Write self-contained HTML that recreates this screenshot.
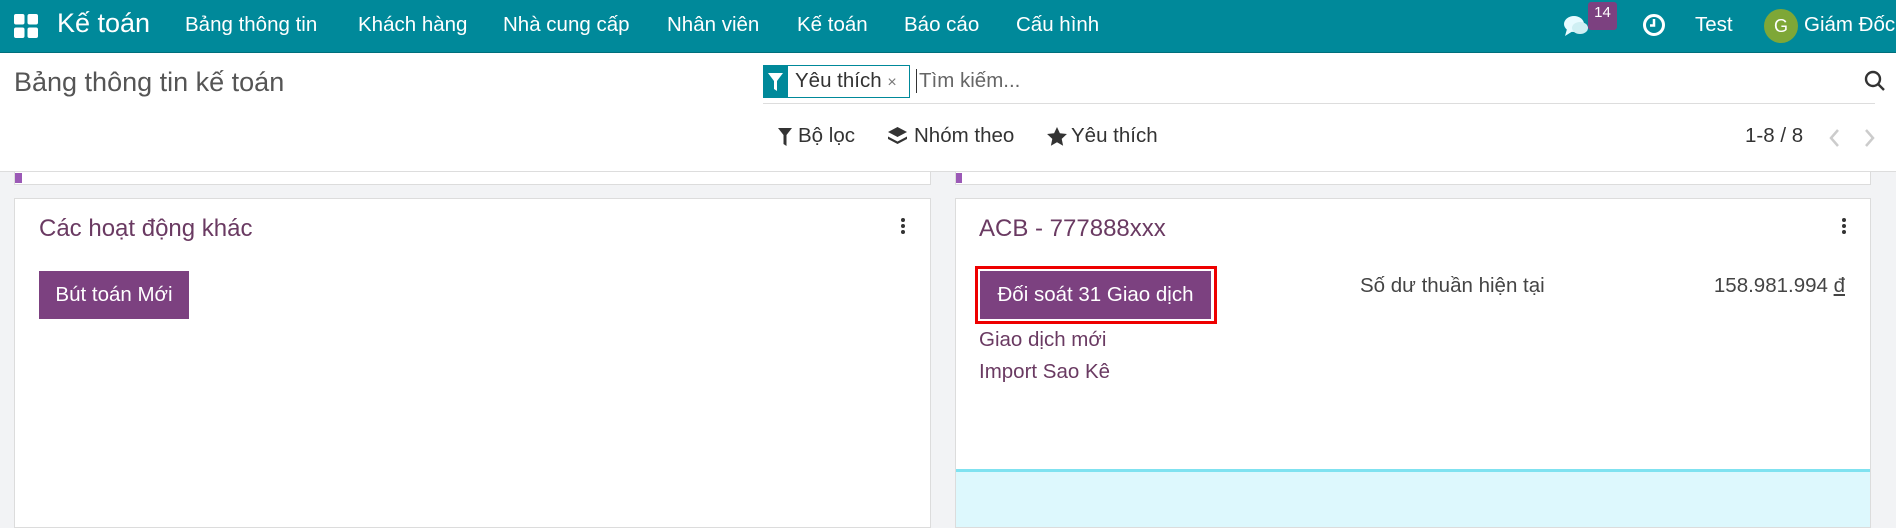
<!DOCTYPE html>
<html><head><meta charset="utf-8"><style>
*{box-sizing:border-box;margin:0;padding:0}
html,body{width:1896px;height:528px;overflow:hidden}
body{background:#f2f3f5;font-family:"Liberation Sans",sans-serif;position:relative}
.a{position:absolute;white-space:nowrap}
.nav{position:absolute;left:0;top:0;width:1896px;height:53px;background:#00899a;border-bottom:1px solid #006f7c;z-index:5}
.nav .a{color:#fff;font-size:20.5px;top:13px}
.cp{position:absolute;left:0;top:53px;width:1896px;height:119px;background:#fff;border-bottom:1px solid #ddd;z-index:4}
.card{position:absolute;background:#fff;border:1px solid #dcdcdc}
.btn{position:absolute;background:#7c4180;color:#fff;font-size:20.5px;text-align:center;line-height:48px}
.pl{color:#6a3a62}
.kb{position:absolute;width:4px}
.kb i{display:block;width:4px;height:4px;border-radius:2px;background:#333;margin-bottom:2px}
</style></head><body>
<div class="nav">
 <svg class="a" style="left:14px;top:14px" width="24" height="24" viewBox="0 0 24 24" fill="#fff"><rect x="0" y="0" width="10.5" height="10.5" rx="2"/><rect x="13.5" y="0" width="10.5" height="10.5" rx="2"/><rect x="0" y="13.5" width="10.5" height="10.5" rx="2"/><rect x="13.5" y="13.5" width="10.5" height="10.5" rx="2"/></svg>
 <div class="a" style="left:57px;top:8px;font-size:27px">Kế toán</div>
 <div class="a" style="left:185px">Bảng thông tin</div>
 <div class="a" style="left:358px">Khách hàng</div>
 <div class="a" style="left:503px">Nhà cung cấp</div>
 <div class="a" style="left:667px">Nhân viên</div>
 <div class="a" style="left:797px">Kế toán</div>
 <div class="a" style="left:904px">Báo cáo</div>
 <div class="a" style="left:1016px">Cấu hình</div>
 <svg class="a" style="left:1563px;top:14px" width="28" height="24" viewBox="0 0 28 24" fill="#e8fbff"><ellipse cx="11" cy="10" rx="10" ry="8"/><path d="M4 15 L2 22 L10 17Z"/><ellipse cx="17" cy="14" rx="8" ry="6" fill="#cfeff3"/></svg>
 <div class="a" style="left:1588px;top:2px;width:29px;height:28px;background:#7c4180;border-radius:3px;font-size:15px;text-align:center;line-height:22px">14</div>
 <svg class="a" style="left:1642px;top:13px" width="24" height="24" viewBox="0 0 24 24" fill="none" stroke="#fff" stroke-width="3"><circle cx="12" cy="12" r="9.5"/><path d="M12 6v6.5H8" stroke-width="2.5"/></svg>
 <div class="a" style="left:1695px">Test</div>
 <div class="a" style="left:1764px;top:9px;width:34px;height:34px;border-radius:17px;background:#7ea737;font-size:18px;text-align:center;line-height:34px">G</div>
 <div class="a" style="left:1804px">Giám Đốc</div>
</div>
<div class="cp">
 <div class="a" style="left:14px;top:14px;font-size:27px;color:#555">Bảng thông tin kế toán</div>
 <div class="a" style="left:763px;top:12px;width:147px;height:33px;border:1px solid #00899a;background:#fff"></div>
 <div class="a" style="left:763px;top:12px;width:25px;height:33px;background:#00899a"></div>
 <svg class="a" style="left:768px;top:20px" width="15" height="18" viewBox="0 0 15 18" fill="#fff"><path d="M0 0H15L9 8V18L6 16V8Z"/></svg>
 <div class="a" style="left:795px;top:16px;font-size:20.5px;color:#333">Yêu thích <span style="color:#777;font-size:16px">×</span></div>
 <div class="a" style="left:916px;top:16px;width:1px;height:24px;background:#333"></div>
 <div class="a" style="left:919px;top:16px;font-size:20.5px;color:#666">Tìm kiếm...</div>
 <div class="a" style="left:763px;top:50px;width:1112px;height:1px;background:#ddd"></div>
 <svg class="a" style="left:1864px;top:17px" width="22" height="22" viewBox="0 0 22 22" fill="none" stroke="#333" stroke-width="2.4"><circle cx="9" cy="9" r="7"/><path d="M14 14l6 6"/></svg>
 <svg class="a" style="left:778px;top:75px" width="14" height="18" viewBox="0 0 14 18" fill="#333"><path d="M0 0H14L8.5 7V18L5.5 16V7Z"/></svg>
 <div class="a" style="left:798px;top:71px;font-size:20.5px;color:#333">Bộ lọc</div>
 <svg class="a" style="left:888px;top:74px" width="19" height="20" viewBox="0 0 19 20" fill="#333"><path d="M9.5 0L19 5L9.5 10L0 5Z"/><path d="M0 9.5L9.5 14.5L19 9.5V12L9.5 17L0 12Z"/></svg>
 <div class="a" style="left:914px;top:71px;font-size:20.5px;color:#333">Nhóm theo</div>
 <svg class="a" style="left:1047px;top:74px" width="20" height="19" viewBox="0 0 24 23" fill="#333"><path d="M12 0l3.5 7.5 8.5 1-6.3 5.8 1.7 8.4L12 18.5 4.6 22.7l1.7-8.4L0 8.5l8.5-1z"/></svg>
 <div class="a" style="left:1071px;top:71px;font-size:20.5px;color:#333">Yêu thích</div>
 <div class="a" style="left:1745px;top:71px;font-size:20.5px;color:#333">1-8 / 8</div>
 <svg class="a" style="left:1827px;top:75px" width="50" height="20" viewBox="0 0 50 20" fill="none" stroke="#ccc" stroke-width="2.5"><path d="M11 2L4 10L11 18"/><path d="M39 2L46 10L39 18"/></svg>
</div>
<div class="card" style="left:14px;top:160px;width:917px;height:25px"></div>
<div class="a" style="left:15px;top:173px;width:7px;height:10px;background:#9b59b6"></div>
<div class="card" style="left:955px;top:160px;width:916px;height:25px"></div>
<div class="a" style="left:956px;top:173px;width:6px;height:10px;background:#9b59b6"></div>

<div class="card" style="left:14px;top:198px;width:917px;height:330px"></div>
<div class="a pl" style="left:39px;top:215px;font-size:24px">Các hoạt động khác</div>
<div class="kb" style="left:901px;top:218px"><i></i><i></i><i></i></div>
<div class="btn" style="left:39px;top:271px;width:150px">Bút toán Mới</div>

<div class="card" style="left:955px;top:198px;width:916px;height:330px"></div>
<div class="a pl" style="left:979px;top:215px;font-size:24px">ACB - 777888xxx</div>
<div class="kb" style="left:1842px;top:218px"><i></i><i></i><i></i></div>
<div class="a" style="left:975px;top:266px;width:242px;height:58px;border:3px solid #e00"></div>
<div class="btn" style="left:980px;top:271px;width:231px">Đối soát 31 Giao dịch</div>
<div class="a pl" style="left:979px;top:328px;font-size:20.5px">Giao dịch mới</div>
<div class="a pl" style="left:979px;top:360px;font-size:20.5px">Import Sao Kê</div>
<div class="a" style="left:1360px;top:274px;font-size:20.5px;color:#444">Số dư thuần hiện tại</div>
<div class="a" style="left:1645px;top:274px;width:200px;text-align:right;font-size:20.5px;color:#444">158.981.994 <u>đ</u></div>
<div class="a" style="left:956px;top:469px;width:914px;height:58px;background:#ddf8fd;border-top:3px solid #7fe2f0"></div>
</body></html>
